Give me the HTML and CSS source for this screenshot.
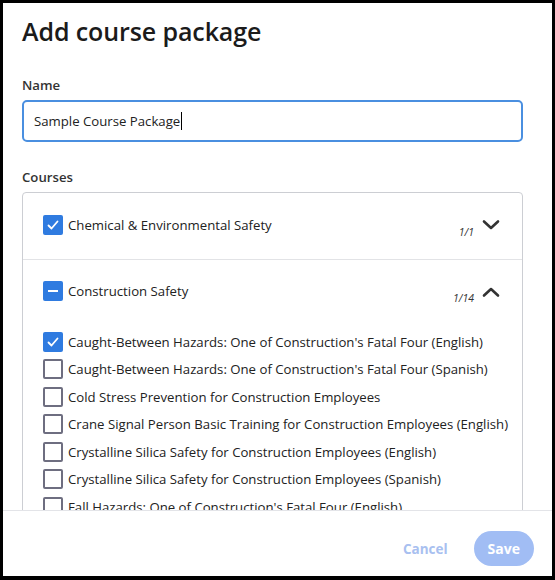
FILE: index.html
```html
<!DOCTYPE html>
<html>
<head>
<meta charset="utf-8">
<link rel="stylesheet" href="styles.css">
</head>
<body>
<div class="dialog">
  <div class="content">
    <h1 class="title">Add course package</h1>
    <label class="label">Name</label>
    <div class="input">Sample Course Package<span class="caret"></span></div>
    <label class="label courses-label">Courses</label>
    <div class="list">
      <div class="group">
        <div class="group-head">
          <span class="cb checked"><svg viewBox="0 0 20 20" width="20" height="20"><path d="M5.5 10.5 L8.5 13.5 L14.5 6.5" fill="none" stroke="#fff" stroke-width="1.8" stroke-linecap="round" stroke-linejoin="round"/></svg></span>
          <span class="group-name">Chemical &amp; Environmental Safety</span>
          <span class="count">1/1</span>
          <svg class="chev" viewBox="0 0 18 12" width="18" height="12"><path d="M2 2.5 L9 9 L16 2.5" fill="none" stroke="#333" stroke-width="2.6" stroke-linecap="round" stroke-linejoin="round"/></svg>
        </div>
      </div>
      <div class="group open">
        <div class="group-head">
          <span class="cb checked"><svg viewBox="0 0 20 20" width="20" height="20"><path d="M5 10 H15" fill="none" stroke="#fff" stroke-width="2"/></svg></span>
          <span class="group-name">Construction Safety</span>
          <span class="count">1/14</span>
          <svg class="chev" viewBox="0 0 18 12" width="18" height="12"><path d="M2 9.5 L9 3 L16 9.5" fill="none" stroke="#333" stroke-width="2.6" stroke-linecap="round" stroke-linejoin="round"/></svg>
        </div>
        <ul class="items">
          <li><span class="cb checked"><svg viewBox="0 0 20 20" width="20" height="20"><path d="M5.5 10.5 L8.5 13.5 L14.5 6.5" fill="none" stroke="#fff" stroke-width="1.8" stroke-linecap="round" stroke-linejoin="round"/></svg></span>Caught-Between Hazards: One of Construction's Fatal Four (English)</li>
          <li><span class="cb"></span>Caught-Between Hazards: One of Construction's Fatal Four (Spanish)</li>
          <li><span class="cb"></span>Cold Stress Prevention for Construction Employees</li>
          <li><span class="cb"></span>Crane Signal Person Basic Training for Construction Employees (English)</li>
          <li><span class="cb"></span>Crystalline Silica Safety for Construction Employees (English)</li>
          <li><span class="cb"></span>Crystalline Silica Safety for Construction Employees (Spanish)</li>
          <li><span class="cb"></span>Fall Hazards: One of Construction's Fatal Four (English)</li>
        </ul>
      </div>
    </div>
  </div>
  <div class="footer">
    <button class="btn-cancel">Cancel</button>
    <button class="btn-save">Save</button>
  </div>
</div>
</body>
</html>
```
FILE: styles.css
```css
html, body {
  margin: 0;
  padding: 0;
  background: #000;
  height: 580px;
  overflow: hidden;
}
body {
  font-family: "Open Sans", "Noto Sans", sans-serif;
  color: #222;
}
.dialog {
  margin: 3px 3px 0 3px;
  width: 549px;
  height: 573px;
  background: #fff;
  display: flex;
  flex-direction: column;
  overflow: hidden;
}
.content {
  flex: 1;
  min-height: 0;
  overflow: hidden;
  padding: 0 29px 0 19px;
  display: flex;
  flex-direction: column;
}
.content > * {
  flex: none;
}
.title {
  margin: 12px 0 0 0;
  font-size: 25px;
  font-weight: 600;
  line-height: 32px;
  color: #1b1b1b;
  letter-spacing: -0.1px;
}
.label {
  display: block;
  font-size: 13.2px;
  font-weight: 600;
  color: #333;
  line-height: 20px;
  margin-top: 28px;
}
.input {
  margin-top: 5px;
  height: 42px;
  box-sizing: border-box;
  border: 2px solid #4a8fe0;
  border-radius: 5px;
  padding: 0 10px;
  display: flex;
  align-items: center;
  font-size: 13.2px;
  color: #222;
}
.caret {
  display: inline-block;
  width: 1px;
  height: 18px;
  background: #000;
  margin-left: 1px;
}
.courses-label {
  margin-top: 25px;
}
.list {
  margin-top: 5px;
  border: 1px solid #ccced3;
  border-radius: 4px;
}
.group + .group {
  border-top: 1px solid #e2e3e6;
}
.group-head {
  display: flex;
  align-items: center;
  height: 66px;
  box-sizing: border-box;
  padding: 0 22px 3px 20px;
}
.cb {
  width: 20px;
  height: 20px;
  box-sizing: border-box;
  border: 2px solid #6e6e80;
  border-radius: 2px;
  flex: none;
  display: inline-flex;
  margin-right: 5px;
}
.cb.checked {
  border: none;
  background: #2f7be0;
}
.group-name {
  font-size: 13.2px;
  flex: 1;
}
.count {
  font-size: 10.5px;
  font-style: italic;
  color: #333;
  margin-top: 14px;
  margin-right: 8px;
}
.chev {
  margin-top: 1px;
}
.group.open .group-head {
  height: 64px;
  padding-bottom: 2px;
}
.items {
  list-style: none;
  margin: 0;
  padding: 4px 0 0 20px;
}
.items li {
  display: flex;
  align-items: center;
  height: 27.5px;
  font-size: 13.2px;
  white-space: nowrap;
}
.footer {
  flex: none;
  height: 66px;
  box-sizing: border-box;
  border-top: 1px solid #e3e4e8;
  display: flex;
  align-items: center;
  justify-content: flex-end;
  padding: 10px 18px 0 0;
  gap: 26px;
}
button {
  font-family: inherit;
  font-size: 14px;
  font-weight: 700;
  border: none;
  cursor: pointer;
}
.btn-cancel {
  background: none;
  color: #a8c0f0;
  padding: 0;
  font-size: 13.5px;
}
.btn-save {
  background: #a1bdf4;
  color: #fff;
  height: 35px;
  padding: 0 14px;
  border-radius: 18px;
}
```
